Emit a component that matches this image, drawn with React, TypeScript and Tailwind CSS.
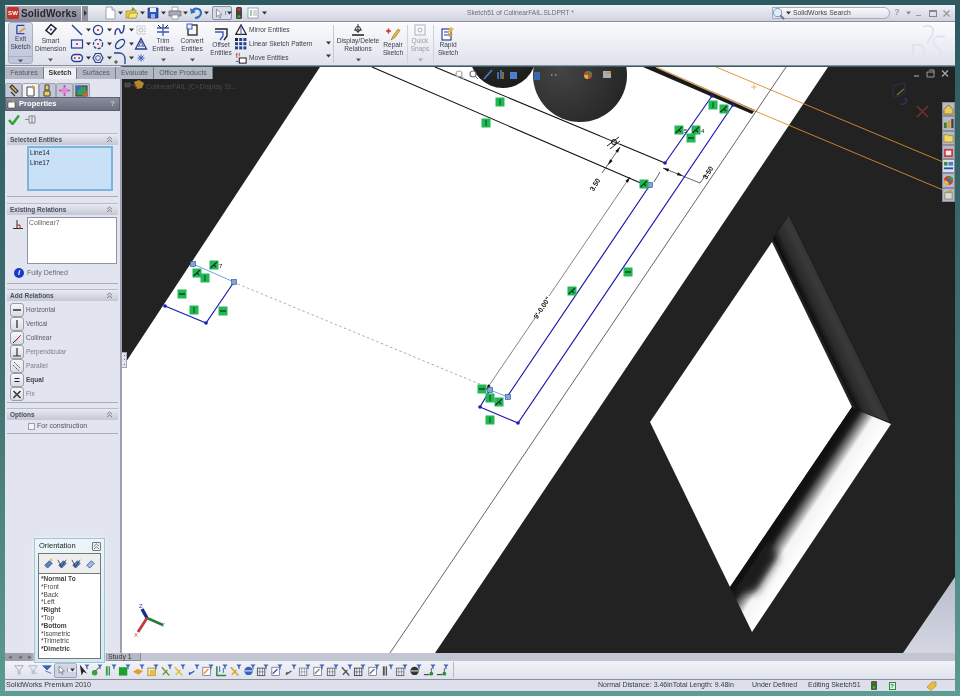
import React from "react";

const Caret = ({ c = "#333" }: { c?: string }) => (
  <svg width="5" height="4" viewBox="0 0 5 4" className="shrink-0"><path d="M0 0.5h5L2.5 3.5z" fill={c} /></svg>
);

const S = ({ w = 14, h = 14, children }: { w?: number; h?: number; children: React.ReactNode }) => (
  <svg width={w} height={h} viewBox="0 0 14 14" className="shrink-0">{children}</svg>
);

/* ---------- quick access icons ---------- */
const NewDoc = () => <S><path d="M3 1h6l3 3v9H3z" fill="#fff" stroke="#9aa0ac" /><path d="M9 1v3h3" fill="#dde" stroke="#9aa0ac" /></S>;
const OpenFolder = () => <S><path d="M1 5h4l1-1h5v8H1z" fill="#e8c74a" stroke="#a88a20" strokeWidth=".7" /><path d="M3 12l2-5h8l-2 5z" fill="#f6e27a" stroke="#a88a20" strokeWidth=".7" /><path d="M7 1l3 2-3 2z" fill="#4aa84a" /></S>;
const Save = () => <S><path d="M2 2h10v10H2z" fill="#2f55b5" stroke="#1c3580" strokeWidth=".7" /><path d="M4 2h6v4H4z" fill="#e8eefc" /><path d="M5 8h4v4H5z" fill="#9db3e6" /></S>;
const Print = () => <S><path d="M4 1h6v4H4z" fill="#fff" stroke="#888" strokeWidth=".7" /><path d="M1 5h12v5H1z" fill="#a8acb6" stroke="#666" strokeWidth=".7" /><path d="M4 9h6v4H4z" fill="#fff" stroke="#888" strokeWidth=".7" /></S>;
const Undo = () => <S><path d="M3 6c2-5 9-4 9 1 0 3-3 5-6 5" fill="none" stroke="#2f6fc8" strokeWidth="2.2" /><path d="M1 2l1 6 5-2z" fill="#2f6fc8" /></S>;
const Arrow = () => <S w={12} h={13}><path d="M4 2v9l2.2-2 1.5 3.5 1.4-.6L7.6 8.5l3-.2z" fill="#fff" stroke="#666" strokeWidth=".8" /></S>;
const Traffic = () => <svg width="6" height="12" viewBox="0 0 6 12" className="shrink-0"><rect width="6" height="12" rx="1.5" fill="#444" /><circle cx="3" cy="2.5" r="1.5" fill="#d93a2a" /><circle cx="3" cy="6" r="1.2" fill="#5a4a20" /><circle cx="3" cy="9.5" r="1.5" fill="#3aa83a" /></svg>;
const Options = () => <S><rect x="2" y="2" width="10" height="10" fill="#fff" stroke="#6a8a9a" strokeWidth=".7" /><path d="M4 5h2M4 7h2M4 9h2" stroke="#4a9a4a" /><path d="M7 5h4M7 7h4M7 9h4" stroke="#aaa" /></S>;

const LogoMark = () => (
  <span className="flex h-[12px] w-[12px] items-center justify-center rounded-[2px] bg-[#c4322a] text-[6px] font-bold leading-none text-white">SW</span>
);

/* ---------- ribbon icons ---------- */
const ExitSketch = () => <svg width="16" height="16" viewBox="0 0 16 16"><path d="M2 2h11M2 2v12h11" fill="none" stroke="#2c3fa8" strokeWidth="1.8" /><path d="M6 10l7-5 1.5 1.5-7 5-2 .5z" fill="#e8b840" stroke="#8a6a10" strokeWidth=".5" /></svg>;
const SmartDim = () => <svg width="14" height="14" viewBox="0 0 14 14"><path d="M7 1.5l5 4-5 6-5-4z" fill="#fff" stroke="#222" strokeWidth="1.6" /><circle cx="7" cy="6.5" r="1.2" fill="#3a5ab8" /></svg>;
const navy = "#27408f";
const G: Record<string, React.ReactNode> = {
  line: <S><path d="M2 2l10 10" stroke={navy} strokeWidth="1.4" /></S>,
  circle: <S><circle cx="7" cy="7" r="4.6" fill="none" stroke={navy} strokeWidth="1.3" /><circle cx="7" cy="7" r="1.1" fill="#d02a2a" /></S>,
  spline: <S><path d="M2 12c0-7 4-8 5-4s4 2 4-6" fill="none" stroke={navy} strokeWidth="1.4" /></S>,
  cbox: <S><rect x="3" y="3" width="8" height="8" fill="none" stroke="#b4b8c4" strokeDasharray="1.5 1" /><circle cx="7" cy="7" r="2" fill="none" stroke="#b4b8c4" /></S>,
  rect: <S><rect x="1.5" y="3" width="11" height="8" fill="#eef" stroke={navy} strokeWidth="1.2" /><circle cx="7" cy="7" r="1.1" fill="#d02a2a" /></S>,
  arc: <S><circle cx="7" cy="7" r="4.6" fill="none" stroke={navy} strokeWidth="1.3" strokeDasharray="3 1.4" /><circle cx="7" cy="7" r="1" fill="#d02a2a" /></S>,
  ellipse: <S><ellipse cx="7" cy="7" rx="3.2" ry="5.6" transform="rotate(45 7 7)" fill="none" stroke={navy} strokeWidth="1.3" /></S>,
  text: <S><path d="M7 1.5L12.5 12h-11z" fill="none" stroke={navy} strokeWidth="1.3" /><path d="M4.8 9h4.4M7 4l-2.5 6M7 4l2.5 6" stroke={navy} strokeWidth=".8" /></S>,
  slot: <S><rect x="1.5" y="3.5" width="11" height="7" rx="3.5" fill="#eef" stroke={navy} strokeWidth="1.4" /><circle cx="4.8" cy="7" r="1" fill="#d02a2a" /><circle cx="9.2" cy="7" r="1" fill="#d02a2a" /></S>,
  poly: <S><path d="M4.5 2.5h5L12 7l-2.5 4.5h-5L2 7z" fill="none" stroke={navy} strokeWidth="1.2" /><circle cx="7" cy="7" r="2.4" fill="none" stroke={navy} strokeWidth=".8" /></S>,
  fillet: <S><path d="M1 2h5c4 0 6 3 6 6v5" fill="none" stroke={navy} strokeWidth="1.3" /><path d="M3 9v4M1 11h4" stroke="#222" strokeWidth=".8" /></S>,
  point: <S><path d="M7 3.5v7M3.5 7h7M4.5 4.5l5 5M9.5 4.5l-5 5" stroke="#3a5ab8" strokeWidth="1" /></S>,
};
const Trim = () => <svg width="14" height="14" viewBox="0 0 14 14"><path d="M7 1v12M1 5h12M1 9h12" stroke="#3a5ab8" strokeWidth="1.3" /><path d="M2 2l3 3M12 2L9 5" stroke="#222" /></svg>;
const Convert = () => <svg width="14" height="14" viewBox="0 0 14 14"><rect x="3" y="2" width="9" height="10" fill="none" stroke="#222" strokeWidth="1.3" /><rect x="2" y="1" width="5" height="5" fill="#eef" stroke="#3a5ab8" /></svg>;
const Offset = () => <svg width="14" height="14" viewBox="0 0 14 14"><path d="M1 2h12v7l-3 4" fill="none" stroke="#222" strokeWidth="1.4" /><path d="M1 5h8v4l-3 4" fill="none" stroke="#3a5ab8" strokeWidth="1.4" /></svg>;
const Mirror = () => <svg width="12" height="12" viewBox="0 0 14 14"><path d="M7 1l6 11H1z" fill="#fff" stroke="#222" strokeWidth="1.4" /><path d="M7 1v12" stroke="#3a5ab8" strokeWidth="1.2" /></svg>;
const Pattern = () => <svg width="12" height="12" viewBox="0 0 12 12">{[0, 4.2, 8.4].map((y) => [0, 4.2, 8.4].map((x) => <rect key={`${x}-${y}`} x={x} y={y} width="3" height="3" fill={x === 0 && y === 0 ? "#222" : "#27408f"} />))}</svg>;
const MoveE = () => <svg width="12" height="12" viewBox="0 0 14 14"><rect x="5" y="7" width="8" height="6" fill="#fff" stroke="#222" strokeWidth="1.2" /><path d="M2 1v6M1 3h2M5 1v4" stroke="#c04030" strokeWidth="1" /><path d="M1 11h3" stroke="#3a5ab8" strokeWidth="1.2" /></svg>;
const DisplayRel = () => <svg width="14" height="16" viewBox="0 0 14 16"><path d="M7 2v9M3 8h8" stroke="#333" /><circle cx="7" cy="7" r="2.5" fill="none" stroke="#333" /><path d="M1 13h12" stroke="#222" strokeWidth="1.5" /></svg>;
const Repair = () => <svg width="16" height="14" viewBox="0 0 16 14"><path d="M1 4h5M3.5 1.5v5" stroke="#d02a2a" strokeWidth="1.5" /><path d="M6 13l2-4 5-7 2 1.5-5 7z" fill="#e8b840" stroke="#7a5a10" strokeWidth=".5" /></svg>;
const QuickSnap = () => <svg width="14" height="14" viewBox="0 0 14 14"><rect x="2" y="2" width="10" height="10" fill="none" stroke="#aeb2be" /><circle cx="7" cy="7" r="2" fill="none" stroke="#aeb2be" /></svg>;
const Rapid = () => <svg width="16" height="16" viewBox="0 0 16 16"><rect x="2" y="3" width="9" height="11" fill="#fff" stroke="#2c3fa8" strokeWidth="1.2" /><path d="M4 6h5M4 9h5" stroke="#2c3fa8" /><path d="M11 1l3 2-3 3-1-1-2 3 1-5z" fill="#e8b840" /><path d="M8 7l5 1-3 4z" fill="#d8a020" /></svg>;

const RibbonBtn = ({ icon, label, w, ml, gray, caret }: { icon: React.ReactNode; label: string[]; w: number; ml: number; gray?: boolean; caret?: boolean }) => (
  <div className={`flex flex-col items-center ${caret ? "pt-[1px]" : "pt-[5px]"}`} style={{ width: w, marginLeft: ml }}>
    <div className="flex h-[14px] items-center justify-center">{icon}</div>
    <div className={`text-center text-[6.6px] leading-[8px] ${gray ? "text-[#9a9eaa]" : "text-[#3c414e]"}`}>
      {label.map((l) => <div key={l} className="whitespace-nowrap">{l}</div>)}
    </div>
    {caret && <div className="mt-[5px]"><Caret c={gray ? "#aaa" : "#555"} /></div>}
  </div>
);

const Ribbon = () => {
  const cell = (k: string, caret = true) => (
    <div key={k} className="flex h-[14px] w-[21px] items-center gap-[2px]">{G[k]}{caret && <Caret />}</div>
  );
  return (
    <div className="relative flex h-[44px] shrink-0 overflow-hidden border-b border-[#8a8e9c] bg-linear-to-b from-[#fcfcfe] to-[#dfe2ec] pl-[3px]">
      <div className="flex h-[42px] w-[25px] flex-col items-center rounded-[3px] border border-[#aab0c4] bg-linear-to-b from-[#d4daea] to-[#c0c6da] pt-[1px]">
        <ExitSketch />
        <div className="text-center text-[6.6px] leading-[8px] text-[#3c414e]">Exit<br />Sketch</div>
        <div className="mt-[5px] border-t border-[#aab0c4] px-[9px] pt-[2px]"><Caret c="#555" /></div>
      </div>
      <RibbonBtn icon={<SmartDim />} label={["Smart", "Dimension"]} w={31} ml={2} caret />
      <div className="ml-[4px] grid h-[43px] w-[85px] shrink-0 grid-cols-4 content-start items-center pt-[1px]">
        {[cell("line"), cell("circle"), cell("spline"), cell("cbox", false)].map((c) => c)}
        {[cell("rect"), cell("arc"), cell("ellipse"), cell("text", false)].map((c) => c)}
        {[cell("slot"), cell("poly"), cell("fillet"), cell("point", false)].map((c) => c)}
      </div>
      <RibbonBtn icon={<Trim />} label={["Trim", "Entities"]} w={24} ml={-4} caret />
      <RibbonBtn icon={<Convert />} label={["Convert", "Entities"]} w={28} ml={3} caret />
      <RibbonBtn icon={<Offset />} label={["Offset", "Entities"]} w={24} ml={3} />
      <div className="ml-[2px] flex w-[91px] flex-col gap-[2px] pt-[2px] text-[6.6px] text-[#3c414e]">
        {[[<Mirror key="m" />, "Mirror Entities"], [<Pattern key="p" />, "Linear Sketch Pattern"], [<MoveE key="e" />, "Move Entities"]].map(([ic, t]) => (
          <div key={t as string} className="flex h-[12px] items-center gap-[2px] whitespace-nowrap">{ic}<span>{t}</span></div>
        ))}
      </div>
      <div className="flex flex-col justify-around pb-[2px] pt-[14px]"><Caret /><Caret /></div>
      <div className="ml-[2px] h-[38px] self-center border-l border-[#c4c8d4]" />
      <RibbonBtn icon={<DisplayRel />} label={["Display/Delete", "Relations"]} w={44} ml={2} caret />
      <RibbonBtn icon={<Repair />} label={["Repair", "Sketch"]} w={24} ml={1} />
      <div className="ml-[2px] h-[38px] self-center border-l border-[#d0d3de]" />
      <RibbonBtn icon={<QuickSnap />} label={["Quick", "Snaps"]} w={22} ml={1} gray caret />
      <div className="ml-[2px] h-[38px] self-center border-l border-[#d0d3de]" />
      <RibbonBtn icon={<Rapid />} label={["Rapid", "Sketch"]} w={24} ml={2} />
      <div className="absolute right-[4px] top-[1px]">
        <svg width="46" height="42" viewBox="0 0 46 42" fill="none" stroke="#e0e4ee" strokeWidth="2"><path d="M18 4c6-3 13 0 9 8l-5 8" /><path d="M8 22v14c10 2 15-6 8-14z" /><path d="M40 14c-8-2-14 1-11 7 3 5 10 6 6 12-2 3-10 5-18 4" /></svg>
      </div>
    </div>
  );
};

const Qa = ({ children }: { children: React.ReactNode }) => (
  <div className="flex w-[21.5px] items-center gap-[1px]">{children}<Caret /></div>
);

const TitleBar = () => (
  <div className="flex h-[17px] shrink-0 items-center border-b border-[#8a8e9c] bg-linear-to-b from-[#f0f1f6] to-[#d0d3df]">
    <div className="flex h-[15px] w-[76px] items-center gap-[2px] bg-linear-to-b from-[#a9acb8] to-[#858894] pl-[2px] text-[10px] font-bold tracking-[0.1px] text-[#2f2f36]">
      <LogoMark /><span className="text-[#26262c]">SolidWorks</span>
    </div>
    <div className="ml-[1px] flex h-[15px] w-[6px] items-center justify-center bg-[#8f929e]"><span className="border-y-[3px] border-l-[3px] border-y-transparent border-l-[#334]" /></div>
    <div className="ml-[15px] flex items-center">
      <Qa><NewDoc /></Qa><Qa><OpenFolder /></Qa><Qa><Save /></Qa><Qa><Print /></Qa><Qa><Undo /></Qa>
    </div>
    <div className="ml-[1.5px] flex h-[14px] w-[20px] items-center rounded-[2px] border border-[#8a90a8] bg-[#d6dbea]"><Arrow /><span className="border-l border-[#8a90a8] px-[0.5px]"><Caret /></span></div>
    <div className="ml-[4px]"><Traffic /></div>
    <div className="ml-[4px] flex items-center gap-[2px]"><Options /><Caret /></div>
    <div className="ml-[200px] whitespace-nowrap text-[6.6px] text-[#6a6e7a]">Sketch51 of ColinearFAIL.SLDPRT *</div>
    <div className="ml-auto flex items-center">
      <div className="flex h-[12px] w-[118px] items-center gap-[1px] rounded-r-[6px] border border-[#a8acb8] bg-linear-to-b from-[#fbfbfd] to-[#dde0ea] text-[6.8px] text-[#444]">
        <svg width="13" height="13" viewBox="0 0 14 14" className="-ml-[1px]"><circle cx="6" cy="6" r="4.4" fill="#dcecf8" stroke="#7a8ea8" /><path d="M9 9l4 4" stroke="#5a6e88" strokeWidth="2" /></svg>
        <Caret /><span className="ml-[1px]">SolidWorks Search</span>
      </div>
      <div className="flex w-[65px] items-center pl-[2px] text-[9px] font-bold text-[#9a9eaa]">
        <span className="w-[10px] text-center">?</span><span className="ml-[4px]"><Caret c="#888" /></span>
        <span className="ml-[5px] mt-[5px] h-[1.5px] w-[5px] bg-[#999]" />
        <span className="ml-[8px] h-[7px] w-[8px] border border-[#888] border-t-2" />
        <svg className="ml-[6px]" width="7" height="7" viewBox="0 0 7 7"><path d="M.5.5l6 6M6.5.5l-6 6" stroke="#999" strokeWidth="1.4" /></svg>
      </div>
    </div>
  </div>
);

/* ---------- left panel ---------- */
const Chev = () => (
  <svg width="7" height="7" viewBox="0 0 7 7" fill="none" stroke="#666" strokeWidth=".8"><path d="M1 3.2l2.5-2.2L6 3.2M1 6l2.5-2.2L6 6" /></svg>
);
const Group = ({ title, h, mt, children }: { title: string; h: number; mt: number; children?: React.ReactNode }) => (
  <div className="mx-[2px] flex flex-col overflow-hidden border-b border-[#a8abb8] bg-[#e2e4ef]" style={{ height: h, marginTop: mt }}>
    <div className="flex h-[12px] shrink-0 items-center justify-between border-t border-[#b8bbc8] bg-linear-to-b from-[#e9ebf2] to-[#c4c7d4] px-[3px] text-[6.5px] font-bold text-[#4a4f5e]">
      <span>{title}</span><span className="mr-[2px]"><Chev /></span>
    </div>
    {children}
  </div>
);
const RelIcon = ({ k }: { k: string }) => {
  const p: Record<string, React.ReactNode> = {
    h: <path d="M2 6h8" stroke="#333" strokeWidth="1.5" />,
    v: <path d="M6 2v8" stroke="#333" strokeWidth="1.3" />,
    c: <><path d="M2 11L10 3" stroke="#222" strokeWidth="1" /><path d="M4 9.5l6-6.5" stroke="#d03030" strokeWidth="1" /></>,
    p: <path d="M6 2v8M2 10h8" stroke="#333" strokeWidth="1.2" />,
    l: <path d="M3 2l6 6M2 5l6 6" stroke="#555" strokeWidth="1" strokeDasharray="1.5 .7" />,
    e: <path d="M3.5 4.5h5M3.5 7.5h5" stroke="#222" strokeWidth="1.2" />,
    f: <><path d="M2.5 3l7 7M9.5 3l-7 7" stroke="#222" strokeWidth="1.2" /><path d="M3 9l3-3" stroke="#3a7a3a" strokeWidth="1.5" /></>,
  };
  return <span className="flex h-[14px] w-[14px] items-center justify-center rounded-[3px] border border-[#9a9eac] bg-linear-to-b from-[#f6f6fa] to-[#d9dbe6]"><svg width="12" height="12" viewBox="0 0 12 12">{p[k]}</svg></span>;
};
const Rel = ({ k, label, bold, gray }: { k: string; label: string; bold?: boolean; gray?: boolean }) => (
  <div className="flex h-[14px] items-center gap-[2px] pl-[3px]">
    <RelIcon k={k} />
    <span className={`text-[6.5px] ${bold ? "font-bold text-[#444]" : gray ? "text-[#7a7d88]" : "text-[#555964]"}`}>{label}</span>
  </div>
);

const PanelTabIcon = ({ i }: { i: number }) => {
  const c = [
    <path key="0" d="M3 3l6 6 2-2-6-6zM4 8l4 4" fill="#e8b840" stroke="#333" strokeWidth="1.1" />,
    <g key="1"><path d="M3 3h7v9H3z" fill="#fff" stroke="#444" /><path d="M8 1l3 2-3 2z" fill="#d8a020" /></g>,
    <g key="2"><path d="M4 1h4v5H4zM3 7h6v5H3z" fill="#e8d060" stroke="#444" /></g>,
    <g key="3"><path d="M6.5 1v11M1 6.5h11" stroke="#c040c0" strokeWidth="1.6" /><circle cx="6.5" cy="6.5" r="3" fill="#e088e0" /></g>,
    <g key="4"><rect x="1" y="2" width="11" height="10" fill="#3a9a5a" stroke="#333" /><path d="M1 2l7 0-7 6z" fill="#3a6ac8" /><path d="M7 12l5-6v6z" fill="#d06030" /></g>,
  ][i];
  return (
    <span className={`flex h-[14px] w-[17px] items-center justify-center rounded-t-[2px] border border-b-0 border-[#a0a3b0] ${i === 1 ? "bg-[#eef0f6]" : "bg-[#c4c7d4]"}`}>
      <svg width="13" height="13" viewBox="0 0 13 13">{c}</svg>
    </span>
  );
};

const LeftPanel = () => (
  <div className="flex w-[117px] shrink-0 flex-col border-r-2 border-[#9ea2b0] bg-[#e2e4ef]">
    <div className="h-[16px] shrink-0" />
    <div className="flex h-[15px] shrink-0 items-end pl-[0px]">
      {[0, 1, 2, 3, 4].map((i) => <PanelTabIcon key={i} i={i} />)}
    </div>
    <div className="flex h-[14px] shrink-0 items-center justify-between border border-[#5c5f70] bg-linear-to-b from-[#8a8e9e] to-[#6c6f80] px-[1px] text-[7.6px] font-bold text-white">
      <span className="flex items-center gap-[2px]">
        <svg width="10" height="10" viewBox="0 0 10 10"><path d="M1 3h7v6H1z" fill="#fff" stroke="#444" strokeWidth=".6" /><path d="M5 1l3 1.5L5 4z" fill="#d8a020" /></svg>
        Properties
      </span>
      <span className="pr-[3px] text-[#c8c8d2]">?</span>
    </div>
    <div className="flex h-[16px] shrink-0 items-center gap-[4px] pl-[3px]">
      <svg width="12" height="11" viewBox="0 0 12 11"><path d="M1 6l3.5 4L11 1.5" fill="none" stroke="#3aa23a" strokeWidth="2.6" /></svg>
      <svg width="12" height="9" viewBox="0 0 12 9"><path d="M5 1v7h6V1zM1 4.5h4M8 1v7" fill="none" stroke="#888" /></svg>
    </div>
    <Group title="Selected Entities" h={64} mt={6}>
      <div className="ml-[20px] mt-[1px] h-[45px] w-[86px] border-2 border-[#7ab4e0] bg-[#c9e1f6] px-[1px] text-[6.5px] leading-[10px] text-[#223]">
        <div>Line14</div><div>Line17</div>
      </div>
    </Group>
    <Group title="Existing Relations" h={81} mt={6}>
      <div className="flex items-start pt-[2px]">
        <svg className="ml-[5px] mt-[2px]" width="12" height="11" viewBox="0 0 12 11"><path d="M5 1v8M1 9.5h10" stroke="#333" /><path d="M5 6h3v3" fill="none" stroke="#c02020" /></svg>
        <div className="ml-[3px] h-[47px] w-[90px] border border-[#8f93a2] bg-white px-[1px] text-[6.8px] leading-[10px] text-[#666]">Collinear7</div>
      </div>
      <div className="mt-[4px] flex items-center gap-[3px] pl-[7px]">
        <span className="flex h-[10px] w-[10px] items-center justify-center rounded-full bg-[#1a3ac8] text-[8px] font-bold italic leading-none text-white">i</span>
        <span className="text-[7px] text-[#666a76]">Fully Defined</span>
      </div>
    </Group>
    <Group title="Add Relations" h={114} mt={5}>
      <div className="flex flex-col pt-[2px]">
        <Rel k="h" label="Horizontal" />
        <Rel k="v" label="Vertical" />
        <Rel k="c" label="Collinear" />
        <Rel k="p" label="Perpendicular" gray />
        <Rel k="l" label="Parallel" gray />
        <Rel k="e" label="Equal" bold />
        <Rel k="f" label="Fix" gray />
      </div>
    </Group>
    <Group title="Options" h={26} mt={5}>
      <div className="flex h-[14px] items-center gap-[2px] pl-[21px] text-[7px] text-[#555]">
        <span className="h-[7px] w-[7px] border border-[#9a9eac] bg-[#f4f4f8]" />
        For construction
      </div>
    </Group>
  </div>
);

/* ---------- viewport ---------- */
const Badge = ({ x, y, k, n }: { x: number; y: number; k: "v" | "h" | "s"; n?: string }) => (
  <g>
    <rect x={x - 4.5} y={y - 4.5} width="9" height="9" fill="#22b655" />
    {k === "v" && <path d={`M${x} ${y - 3}v6`} stroke="#062" strokeWidth="1.2" />}
    {k === "h" && <path d={`M${x - 3} ${y}h6`} stroke="#031" strokeWidth="1.2" />}
    {k === "s" && <path d={`M${x - 3.5} ${y + 3}L${x + 3} ${y - 3}M${x + 2} ${y + 2}l-2 -2`} stroke="#132" strokeWidth="1.1" />}
    {n && <text x={x + 5} y={y + 3} fontSize="6" fill="#111">{n}</text>}
  </g>
);

const Viewport = () => {
  const blue = "#1c1cae";
  const lb = "#6ea6dc";
  const big = (x: number, y: number) => <rect key={`b${x}`} x={x - 2.5} y={y - 2.5} width="5" height="5" fill="#7fa6d6" stroke="#2a4a9a" strokeWidth=".6" />;
  const dot = (x: number, y: number) => <circle key={`d${x}`} cx={x} cy={y} r="1.8" fill="#1c1cae" />;
  const head = (x: number, y: number, a: number) => <path key={`h${x}${y}`} d="M0 0l6 -1.6v3.2z" transform={`translate(${x} ${y}) rotate(${a})`} fill="#111" />;
  return (
    <svg viewBox="122 67 833 586" width="833" height="586" className="block">
      <defs>
        <radialGradient id="c1" cx="45%" cy="35%" r="70%"><stop offset="0" stopColor="#343434" /><stop offset="1" stopColor="#1a1a1a" /></radialGradient>
        <radialGradient id="c2" cx="30%" cy="45%" r="80%"><stop offset="0" stopColor="#444444" /><stop offset="1" stopColor="#222222" /></radialGradient>
        <linearGradient id="wall" gradientUnits="userSpaceOnUse" x1="815" y1="325" x2="838" y2="314"><stop offset="0" stopColor="#0c0c0c" /><stop offset=".3" stopColor="#2a2a2a" /><stop offset=".75" stopColor="#3a3a3a" /><stop offset="1" stopColor="#333" /></linearGradient>
        <linearGradient id="strip" gradientUnits="userSpaceOnUse" x1="790" y1="510" x2="820" y2="530"><stop offset="0" stopColor="#111" /><stop offset=".1" stopColor="#222" /><stop offset=".3" stopColor="#888" /><stop offset=".5" stopColor="#f4f4f4" /><stop offset="1" stopColor="#fff" /></linearGradient>
        <linearGradient id="corner" x1="0" y1="0" x2="0" y2="1"><stop offset="0" stopColor="#b8bccc" /><stop offset="1" stopColor="#d4d7e2" /></linearGradient>
        <clipPath id="stripClip"><path d="M857 410L891 424L752 632L733 593z" /></clipPath>
        <filter id="soft" x="-40%" y="-40%" width="180%" height="180%"><feGaussianBlur stdDeviation="4" /></filter>
      </defs>
      <rect x="122" y="67" width="833" height="586" fill="#222222" />
      <path d="M320 67H828L435 653H122V368z" fill="#fff" />
      <path d="M955 577L903 653H955z" fill="url(#corner)" />
      {/* hole */}
      <path d="M789 215L891 423L857 410L773 238z" fill="url(#wall)" stroke="#111" strokeWidth=".5" />
      <path d="M857 410L891 424L752 632L733 593z" fill="url(#strip)" />
      <g clipPath="url(#stripClip)">
        <path d="M728 592L756 592L778 556L758 530z" fill="#1c1c1c" filter="url(#soft)" />
      </g>
      <path d="M772 242L852 407L730 587L650 422z" fill="#fff" />
      <path d="M852 407L857 410L733 593L730 587z" fill="#111" />
      {/* cylinders */}
      <circle cx="503" cy="55" r="33" fill="url(#c1)" />
      <circle cx="580" cy="75" r="47" fill="url(#c2)" />
      {/* edge band */}
      <path d="M643 67H656L755 110L752 114z" fill="#1a1a1a" />
      <path d="M656 67L755 111" stroke="#d6a56a" strokeWidth="1.4" />
      <path d="M716 67L955 167M755 111L955 195" stroke="#d88c2c" strokeWidth=".9" fill="none" />
      <path d="M751 87h6M754 84v6" stroke="#d8a050" strokeWidth=".7" />
      {/* thin edge */}
      <path d="M786 67L390 653" stroke="#222" strokeWidth=".7" />
      {/* black edges */}
      <path d="M372 67L643 184M435 67L665 163" stroke="#111" strokeWidth="1.1" />
      <path d="M600 135L620 144" stroke="#fff" strokeWidth=".5" />
      {/* dims */}
      <path d="M620 147L602 173M660 172L654 182" stroke="#222" strokeWidth=".7" />
      <path d="M630 177L549 296M535 318L486 390" stroke="#333" strokeWidth=".6" />
      <path d="M663 168L700 183L708 172" fill="none" stroke="#222" strokeWidth=".7" />
      {head(620, 147, 124)}{head(608, 165, -56)}{head(630, 177, 124)}{head(486, 390, -56)}{head(663, 168, 22)}{head(683, 176, 202)}
      <path d="M607 146l12 -9M610 149l10 -8" stroke="#222" strokeWidth="1" />
      <circle cx="614" cy="142" r="2.5" fill="none" stroke="#111" />
      <text x="0" y="0" fontSize="7" fontWeight="600" fill="#111" textAnchor="middle" transform="translate(597 186) rotate(-58)">3.50</text>
      <text x="0" y="0" fontSize="7" fontWeight="600" fill="#111" textAnchor="middle" transform="translate(710 174) rotate(-58)">3.50</text>
      <text x="0" y="0" fontSize="7" fontWeight="600" fill="#111" textAnchor="middle" transform="translate(544 309) rotate(-57)">9'-0.00"</text>
      <path d="M233 282L482 385" stroke="#888" strokeWidth=".7" strokeDasharray="2.5 2.5" />
      {/* blue sketch */}
      <path d="M712 96L665 163M650 185L507 397M733 105L518 423L480 407L490 390M234 282L206 323L165 306" fill="none" stroke={blue} strokeWidth="1.2" />
      <path d="M193 264L234 282M490 390L508 397" stroke={lb} strokeWidth="1" />
      {[[712, 96], [733, 105], [665, 163], [480, 407], [518, 423], [206, 323], [165, 306]].map(([x, y]) => dot(x, y))}
      {[[193, 264], [234, 282], [490, 390], [508, 397], [650, 185]].map(([x, y]) => big(x, y))}
      {/* badges */}
      <Badge x={500} y={102} k="v" /><Badge x={486} y={123} k="v" />
      <Badge x={713} y={105} k="v" /><Badge x={724} y={109} k="s" />
      <Badge x={679} y={130} k="s" n="5" /><Badge x={696} y={130} k="s" n="4" /><Badge x={691} y={138} k="h" />
      <Badge x={644} y={184} k="s" /><Badge x={572} y={291} k="s" /><Badge x={628} y={272} k="h" />
      <Badge x={214} y={265} k="s" n="7" /><Badge x={197} y={273} k="s" /><Badge x={205} y={278} k="v" />
      <Badge x={182} y={294} k="h" /><Badge x={194} y={310} k="v" /><Badge x={223} y={311} k="h" />
      <Badge x={482} y={389} k="h" /><Badge x={490} y={398} k="v" /><Badge x={499} y={402} k="s" /><Badge x={490} y={420} k="v" />
      {/* tree */}
      <path d="M125 83h5v4h-5zM130 85h4" fill="#444" stroke="#666" strokeWidth=".5" />
      <path d="M134 82l5 -2 5 3 -2 5 -5 1z" fill="#b08a28" />
      <path d="M134 85l3 3" stroke="#a03020" strokeWidth="1.2" />
      <text x="146" y="89" fontSize="7" fill="#4a4a4a">ColinearFAIL  (C&lt;Display St...</text>
      {/* heads-up icons */}
      <g>
        <circle cx="459" cy="74" r="3" fill="none" stroke="#aaa" strokeWidth="1.2" />
        <path d="M461 76l3 3" stroke="#aaa" strokeWidth="1.2" />
        <circle cx="473" cy="74" r="3" fill="none" stroke="#778" strokeWidth="1.2" /><path d="M475 76l3 3" stroke="#778" />
        <path d="M484 79l8-9" stroke="#4a7ac8" strokeWidth="1.8" />
        <path d="M498 72v7M501 70v9" stroke="#5a8ad0" strokeWidth="1.4" /><path d="M503 72v7" stroke="#c8a030" strokeWidth="1.2" />
        <rect x="510" y="72" width="7" height="7" fill="#4a80d0" />
        <rect x="534" y="72" width="6" height="8" fill="#3a66b0" />
        <path d="M551 75h1.5M555 75h1.5" stroke="#999" strokeWidth="1.4" />
        <circle cx="588" cy="75" r="4" fill="#c84a3a" /><path d="M588 71a4 4 0 0 1 4 4h-4z" fill="#3a8a4a" /><path d="M584 75a4 4 0 0 0 4 4v-4z" fill="#d8b830" />
        <rect x="603" y="71" width="8" height="7" fill="#aab" /><path d="M605 73l6 -2v3z" fill="#c89030" />
      </g>
      {/* window controls in viewport */}
      <path d="M914 76h5" stroke="#888" strokeWidth="1.4" />
      <path d="M927 72h7v5h-7zM929 70h5v2" fill="none" stroke="#999" strokeWidth="1" />
      <path d="M942 70.5l6 6M948 70.5l-6 6" stroke="#aaa" strokeWidth="1.2" />
      {/* confirmation corner */}
      <path d="M893 86l12-3v8c0 4-6 6-12 5z" fill="none" stroke="#30304a" strokeWidth="1" />
      <path d="M897 95l7-6" stroke="#7a6a30" strokeWidth="1.5" />
      <path d="M905 98c3 3 1 7-4 6" fill="none" stroke="#4a2a6a" strokeWidth="1.4" />
      <path d="M917 106l11 11M928 106l-11 11" stroke="#743030" strokeWidth="1.6" />
      {/* triad */}
      <path d="M147 618L142 609" stroke="#1a2a8a" strokeWidth="3.4" />
      <path d="M147 618L163 625" stroke="#2a7a3a" strokeWidth="2.8" />
      <path d="M147 618L138 632" stroke="#c03a3a" strokeWidth="2.8" />
      <text x="139" y="608" fontSize="6" fill="#3a3aa0">Z</text>
      <text x="161" y="627" fontSize="6" fill="#3a7a3a">Y</text>
      <text x="134" y="637" fontSize="6" fill="#c04a4a">X</text>
    </svg>
  );
};

const TaskPane = () => {
  const items: React.ReactNode[] = [
    <path key="a" d="M6 1L1 6v5h10V6z" fill="#e8c860" stroke="#8a6a20" />,
    <g key="b"><rect x="1" y="5" width="3" height="6" fill="#3a7a3a" /><rect x="5" y="3" width="3" height="8" fill="#d8a030" /><rect x="9" y="1" width="2.5" height="10" fill="#444" /></g>,
    <path key="c" d="M1 3h4l1 1h5v7H1z" fill="#f0d870" stroke="#a88a20" />,
    <g key="d"><rect x="1" y="2" width="10" height="9" fill="#c84040" /><path d="M3 4h6v5H3z" fill="#eee" /></g>,
    <g key="e"><rect x="1" y="1" width="4" height="4" fill="#3a8a4a" /><rect x="6" y="1" width="5" height="4" fill="#4a80c8" /><rect x="1" y="7" width="10" height="2" fill="#2a4ab0" /></g>,
    <g key="f"><circle cx="6" cy="6" r="5" fill="#d83a2a" /><path d="M6 1a5 5 0 0 1 5 5H6z" fill="#3a9a4a" /><path d="M1 6a5 5 0 0 0 5 5V6z" fill="#e8c030" /><circle cx="6" cy="6" r="2" fill="#3a6ac8" /></g>,
    <g key="g"><rect x="2" y="4" width="8" height="7" fill="#e0d8c0" stroke="#888" /><path d="M3 3l6 -2 1 2z" fill="#c8903a" /></g>,
  ];
  return (
    <div className="absolute right-0 top-[36px] flex flex-col">
      {items.map((it, i) => (
        <div key={i} className={`flex h-[14.3px] w-[13px] items-center justify-center border border-[#8a8e9c] ${i === 4 ? "bg-[#dde1ee]" : "bg-[#b6b9c6]"}`}>
          <svg width="11" height="11" viewBox="0 0 12 12">{it}</svg>
        </div>
      ))}
    </div>
  );
};

/* ---------- bottom ---------- */
const Funnel = () => <path d="M8 1h5.5L11.4 3.4V6.5L10 5.5V3.4z" fill="#3a62b8" />;
const filters: [string, string][] = [
  ["cursor", "#222"], ["dot", "#3aa23a"], ["bars", "#3a9a4a"], ["sq", "#1fa02a"], ["cube", "#e89a28"], ["box", "#e8c040"], ["x", "#6a9a3a"], ["x", "#d8c030"],
  ["pt", "#3a62b8"], ["pen", "#e89a28"], ["lbar", "#2a8a3a"], ["x", "#d8a020"], ["disk", "#3a62b8"], ["grid", "#555"], ["pen", "#3a62b8"], ["pt", "#555"],
  ["grid", "#888"], ["pen", "#888"], ["grid", "#666"], ["x", "#555"], ["grid", "#444"], ["pen", "#777"], ["bars", "#555"], ["grid", "#666"], ["disk", "#333"], ["dash", "#2a8a3a"], ["dash", "#2a8a3a"],
];
const FilterIcon = ({ t, c }: { t: string; c: string }) => (
  <svg width="13" height="14" viewBox="0 0 14 14" className="shrink-0">
    {t === "cursor" && <path d="M3 1l2 12 2-4 4 2z" fill={c} />}
    {t === "dot" && <><circle cx="5" cy="10" r="3" fill={c} /><path d="M6 8l5-5" stroke="#333" /></>}
    {t === "bars" && <><rect x="2" y="3" width="2" height="10" fill={c} /><rect x="5" y="3" width="1.5" height="10" fill={c} /></>}
    {t === "sq" && <rect x="1" y="4" width="9" height="9" fill={c} />}
    {t === "cube" && <path d="M1 9l5 -3 6 2 -5 4z" fill={c} />}
    {t === "box" && <><rect x="2" y="5" width="8" height="8" fill="none" stroke="#b88a20" /><rect x="4" y="7" width="6" height="6" fill={c} /></>}
    {t === "x" && <path d="M2 4l8 9M3 12l5-5" stroke={c} strokeWidth="1.5" />}
    {t === "pt" && <path d="M2 12l6-4M2 10h3" stroke={c} strokeWidth="1.4" />}
    {t === "pen" && <><rect x="2" y="4" width="8" height="9" fill="#fff" stroke="#556" strokeWidth=".7" /><path d="M3 11l5-5" stroke={c} strokeWidth="1.6" /></>}
    {t === "lbar" && <><path d="M2 3v10h10" fill="none" stroke={c} strokeWidth="1.6" /><path d="M5 3v6M9 5v5" stroke="#3a62b8" /></>}
    {t === "disk" && <><circle cx="6" cy="8" r="4.5" fill={c} /><path d="M2 8h8" stroke="#fff" /></>}
    {t === "grid" && <><rect x="1.5" y="5" width="8" height="8" fill="#eef" stroke={c} /><path d="M4 5v8M7 5v8M2 9h7" stroke={c} strokeWidth=".6" /></>}
    {t === "dash" && <><path d="M1 12h6" stroke="#222" strokeWidth="1" /><circle cx="9" cy="11" r="2" fill={c} /><path d="M9 9V5" stroke="#555" /></>}
    <Funnel />
  </svg>
);

const ViewToolbar = () => (
  <div className="flex h-[19px] shrink-0 items-center border-b border-[#8a8e9c] bg-linear-to-b from-[#f2f3f8] to-[#dfe2ec] pl-[8px]">
    <svg width="12" height="12" viewBox="0 0 14 14"><path d="M2 2h10L8 7v5L6 11V7z" fill="none" stroke="#9ea2b0" /></svg>
    <span className="ml-[2px]"><svg width="12" height="12" viewBox="0 0 14 14"><path d="M2 2h10L8 7v5L6 11V7z" fill="none" stroke="#aab" /><path d="M8 8l4 4" stroke="#aab" /></svg></span>
    <span className="ml-[2px]"><svg width="12" height="12" viewBox="0 0 14 14"><path d="M2 2l5 5 5-5zM5 8l7 3" fill="#3a62b8" stroke="#3a62b8" /></svg></span>
    <div className="ml-[1px] flex h-[15px] items-center rounded-[2px] border border-[#9aa0b4] bg-[#cfd4e4]">
      <span className="flex w-[12px] justify-center"><svg width="11" height="12" viewBox="0 0 14 14"><path d="M4 2v9l2.2-2 1.5 3.5 1.4-.6L7.6 8.5l3-.2z" fill="#fff" stroke="#667" strokeWidth=".9" /></svg></span>
      <span className="flex w-[9px] justify-center border-l border-[#9aa0b4] bg-[#e8eaf2]"><Caret /></span>
    </div>
    <div className="ml-[-0.5px] flex w-[373px] items-center justify-between">
      {filters.map(([t, c], i) => <FilterIcon key={i} t={t} c={c} />)}
    </div>
    <div className="ml-[3.5px] h-[16px] border-l border-[#b4b8c4]" />
  </div>
);

const Status = () => (
  <div className="flex h-[11px] shrink-0 items-center bg-[#dde0ea] pl-[1px] text-[7px] text-[#333840]">
    <span className="w-[592px] whitespace-nowrap text-[7.2px]">SolidWorks Premium 2010</span>
    <span className="w-[154px] whitespace-nowrap">Normal Distance: 3.46inTotal Length: 9.48in</span>
    <span className="w-[56px] whitespace-nowrap">Under Defined</span>
    <span className="w-[63px] whitespace-nowrap">Editing Sketch51</span>
    <svg width="6" height="9" viewBox="0 0 6 9"><rect width="6" height="9" rx="1" fill="#3a6a3a" /><circle cx="3" cy="2" r="1.2" fill="#c83a2a" /><circle cx="3" cy="6.5" r="1.2" fill="#3ac83a" /></svg>
    <span className="ml-[11.5px] flex h-[8px] w-[7px] items-center justify-center border border-[#2a8a4a] bg-[#dff5e6] text-[6px] font-bold leading-none text-[#167a3a]">?</span>
    <svg className="ml-[30px]" width="11" height="10" viewBox="0 0 11 10"><path d="M1 6l5-5h4v4L5 9.5z" fill="#e8c040" stroke="#a88020" strokeWidth=".6" /></svg>
  </div>
);

const Orientation = () => {
  const items: [string, boolean][] = [["*Normal To", true], ["*Front", false], ["*Back", false], ["*Left", false], ["*Right", true], ["*Top", false], ["*Bottom", true], ["*Isometric", false], ["*Trimetric", false], ["*Dimetric", true]];
  const IconO = ({ v }: { v: number }) => (
    <svg width="11" height="11" viewBox="0 0 12 12">
      <path d="M2 8l5-5 3 3-5 5z" fill={v === 3 ? "#9ac0e8" : "#5a84c0"} stroke="#27408f" strokeWidth=".8" />
      {v === 0 && <path d="M8 1l2 2" stroke="#e8c040" strokeWidth="2" />}
      {(v === 1 || v === 2) && <path d="M1 2l4 8M10 2L5 9" stroke="#222" strokeWidth=".8" />}
    </svg>
  );
  return (
    <div className="absolute left-[34px] top-[538px] z-10 flex h-[125px] w-[71px] flex-col border border-[#9fc6d2] bg-linear-to-b from-[#eaf6fa] to-[#d4eaf2] px-[3px] pb-[3px] shadow-[0_0_4px_#ffffffaa]">
      <div className="flex h-[14px] shrink-0 items-center justify-between pl-[1px] text-[7.5px] text-[#222]">
        <span>Orientation</span>
        <span className="flex h-[9px] w-[9px] items-center justify-center rounded-[1px] border border-[#777] bg-[#eef2f6]"><Chev /></span>
      </div>
      <div className="flex h-[20px] shrink-0 items-center justify-around border border-b-0 border-[#777] bg-[#eeeeee] px-[2px]">
        {[0, 1, 2, 3].map((v) => <IconO key={v} v={v} />)}
      </div>
      <div className="flex-1 border border-[#777] bg-white px-[2px] pt-[1px] text-[6.6px] leading-[7.8px] text-[#444]">
        {items.map(([t, b]) => <div key={t} className={b ? "font-bold" : ""}>{t}</div>)}
      </div>
    </div>
  );
};

export default function App() {
  return (
    <div className="relative h-[696px] w-[960px] overflow-hidden bg-linear-to-b from-[#2c5a5e] via-[#3f6e70] to-[#5c9c92] p-[5px] font-['Liberation_Sans',sans-serif] blur-[0.3px]">
      <div className="flex h-[686px] flex-col overflow-hidden">
        <TitleBar />
        <Ribbon />
        <div className="relative flex h-[587px] shrink-0">
          <LeftPanel />
          <div className="relative h-[587px] flex-1 overflow-hidden pt-[1px]">
            <Viewport />
            <TaskPane />
          </div>
          <div className="absolute left-[117px] top-[286px] flex h-[16px] w-[5px] flex-col items-center justify-around border border-l-0 border-[#a0a3b0] bg-[#e2e4ef]">
            <span className="h-[1px] w-[1px] bg-[#667]" /><span className="h-[1px] w-[1px] bg-[#667]" /><span className="h-[1px] w-[1px] bg-[#667]" />
          </div>
          {/* feature manager tabs lie over the canvas */}
          <div className="absolute left-0 top-[1px] flex h-[12px] items-stretch bg-[#8e919e] text-[7px] text-[#555a66]">
            {([["Features", 39], ["Sketch", 33], ["Surfaces", 39], ["Evaluate", 38], ["Office Products", 59]] as [string, number][]).map(([t, w]) => (
              <div key={t} style={{ width: w }} className={`flex items-center justify-center whitespace-nowrap border-r border-[#777a88] ${t === "Sketch" ? "border-t border-t-[#ccc] bg-[#eef0f6] font-bold text-[#333]" : "bg-[#b4b7c4]"}`}>{t}</div>
            ))}
          </div>
        </div>
        <div className="flex h-[8px] shrink-0 items-stretch bg-[#c2c5d2] text-[7px] leading-[8px] text-[#333]">
          <div className="flex w-[30px] items-center justify-around bg-[#9c9faa] text-[6px] text-[#667]"><span>◄</span><span>◄</span><span>►</span></div>
          <div className="ml-[71px] w-[35px] border border-t-0 border-[#8a8e9c] bg-[#b6b8c6] pl-[1px]">Study 1</div>
        </div>
        <ViewToolbar />
        <Status />
      </div>
      <Orientation />
    </div>
  );
}
